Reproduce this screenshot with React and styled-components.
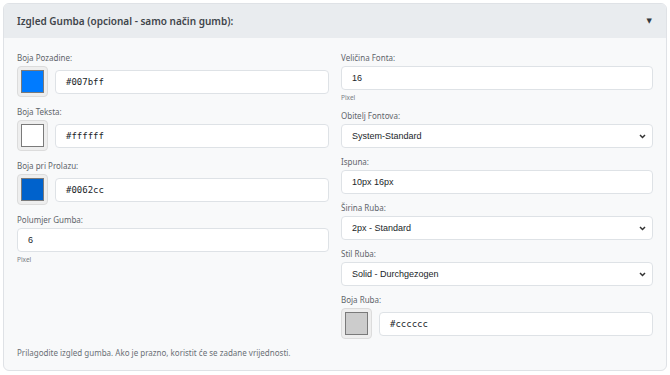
import React from "react";
import styled, { createGlobalStyle } from "styled-components";

const Global = createGlobalStyle`
  html, body { margin: 0; padding: 0; background: #ffffff; }
  body { padding: 3px; font-family: "Noto Sans", "Open Sans", sans-serif; }
  * { box-sizing: border-box; }
`;

const Card = styled.section`
  width: 664px;
  height: 368px;
  border: 1px solid #dfe2e6;
  border-radius: 6px;
  background: #f8f9fa;
  overflow: hidden;
  display: flex;
  flex-direction: column;
`;

const Header = styled.div`
  height: 34px;
  background: #e9ecef;
  display: flex;
  align-items: center;
  justify-content: space-between;
  padding: 0 14px 0 13px;
`;

const Title = styled.h3`
  margin: 0;
  font-size: 10px;
  font-weight: 600;
  color: #3f454b;
  font-family: "Noto Sans", "Open Sans", sans-serif;
`;

const Caret = styled.span`
  font-size: 7px;
  color: #343a40;
  font-family: "DejaVu Sans", sans-serif;
`;

const Body = styled.div`
  flex: 1;
  padding: 14px 13px 11px;
  display: flex;
  flex-direction: column;
`;

const Grid = styled.div`
  display: grid;
  grid-template-columns: 1fr 1fr;
  column-gap: 12px;
  align-items: start;
`;

const Column = styled.div`
  display: flex;
  flex-direction: column;
  gap: ${(p) => p.$gap}px;
`;

const Group = styled.div`
  display: flex;
  flex-direction: column;
`;

const Label = styled.label`
  display: block;
  font-size: 8px;
  line-height: 11px;
  color: #5f656b;
  margin-bottom: 3px;
`;

const Hint = styled.div`
  font-size: 6.5px;
  line-height: 9px;
  color: #7a8086;
  margin-top: 3px;
`;

const Field = styled.div`
  height: 24px;
  flex: none;
  border: 1px solid #dee2e6;
  border-radius: 4px;
  background: #ffffff;
  display: flex;
  align-items: center;
  padding: 0 10px;
  font-family: "Liberation Sans", Arial, sans-serif;
  font-size: 9px;
  color: #212529;
  min-width: 0;
`;

const HexField = styled(Field)`
  flex: 1;
  font-family: "DejaVu Sans Mono", "Liberation Mono", monospace;
`;

const SelectBox = styled(Field)`
  justify-content: space-between;
  padding-right: 6px;
`;

const ColorRow = styled.div`
  display: flex;
  align-items: center;
  gap: 7px;
`;

const Swatch = styled.div`
  width: 31px;
  height: 31px;
  flex: none;
  border: 1px solid #dcdcdc;
  border-radius: 4px;
  background: #eeeeee;
  padding: 3px;
  display: flex;
`;

const SwatchColor = styled.div`
  flex: 1;
  background: ${(p) => p.$color};
  border: 1px solid #7a7a7a;
`;

const Footer = styled.p`
  margin: auto 0 0;
  font-size: 8px;
  line-height: 12px;
  color: #6a7076;
`;

const Chevron = () => (
  <svg width="7" height="5" viewBox="0 0 7 5">
    <path d="M1 1 L3.5 3.5 L6 1" stroke="#333" strokeWidth="1.5" fill="none" />
  </svg>
);

const ColorField = ({ label, color }) => (
  <Group>
    <Label>{label}</Label>
    <ColorRow>
      <Swatch>
        <SwatchColor $color={color} />
      </Swatch>
      <HexField>{color}</HexField>
    </ColorRow>
  </Group>
);

const TextField = ({ label, value, hint }) => (
  <Group>
    <Label>{label}</Label>
    <Field>{value}</Field>
    {hint && <Hint>{hint}</Hint>}
  </Group>
);

const SelectField = ({ label, value }) => (
  <Group>
    <Label>{label}</Label>
    <SelectBox>
      <span>{value}</span>
      <Chevron />
    </SelectBox>
  </Group>
);

export default function App() {
  return (
    <>
      <Global />
      <Card>
        <Header>
          <Title>Izgled Gumba (opcional - samo način gumb):</Title>
          <Caret>▼</Caret>
        </Header>
        <Body>
          <Grid>
            <Column $gap={9}>
              <ColorField label="Boja Pozadine:" color="#007bff" />
              <ColorField label="Boja Teksta:" color="#ffffff" />
              <ColorField label="Boja pri Prolazu:" color="#0062cc" />
              <TextField label="Polumjer Gumba:" value="6" hint="Pixel" />
            </Column>
            <Column $gap={8}>
              <TextField label="Veličina Fonta:" value="16" hint="Pixel" />
              <SelectField label="Obitelj Fontova:" value="System-Standard" />
              <TextField label="Ispuna:" value="10px 16px" />
              <SelectField label="Širina Ruba:" value="2px - Standard" />
              <SelectField label="Stil Ruba:" value="Solid - Durchgezogen" />
              <ColorField label="Boja Ruba:" color="#cccccc" />
            </Column>
          </Grid>
          <Footer>Prilagodite izgled gumba. Ako je prazno, koristit će se zadane vrijednosti.</Footer>
        </Body>
      </Card>
    </>
  );
}
